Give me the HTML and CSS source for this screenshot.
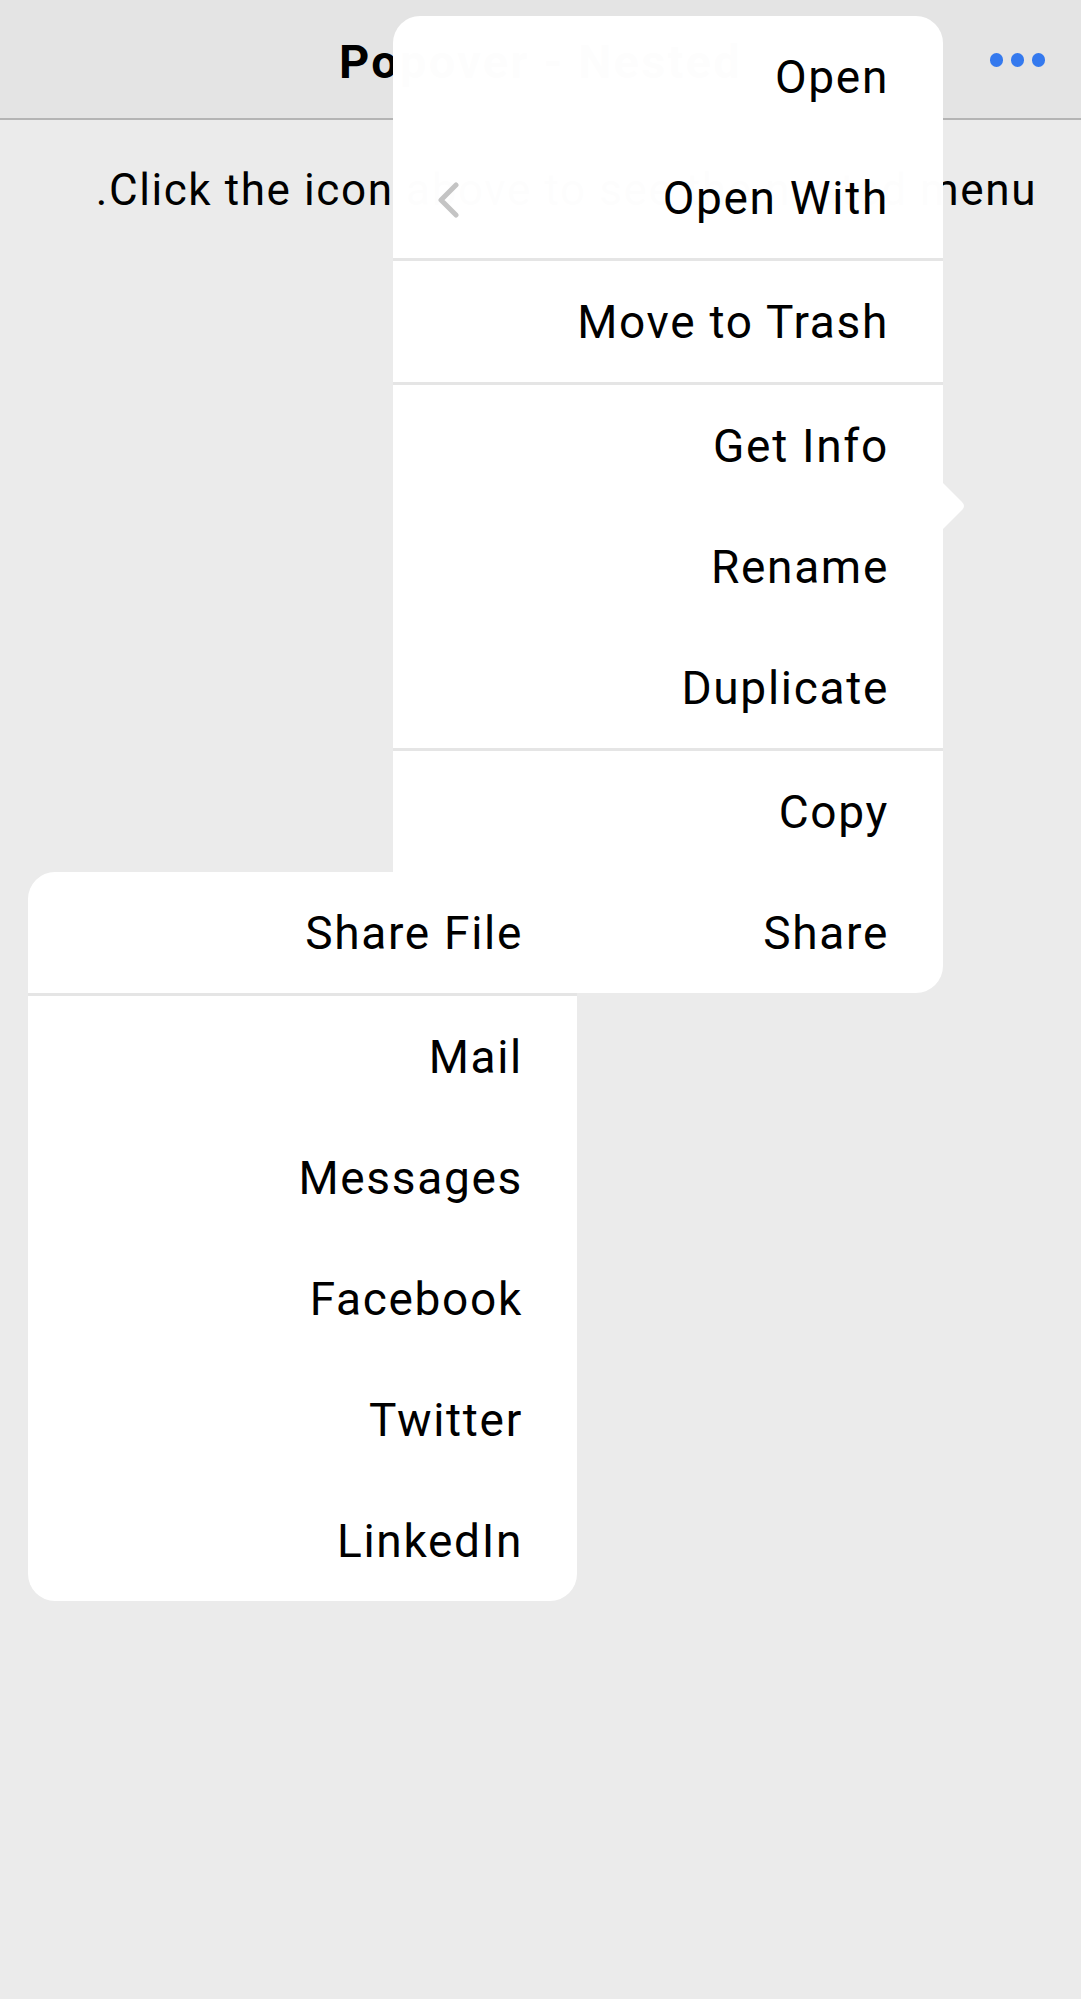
FILE: index.html
```html
<!DOCTYPE html>
<html lang="en">
<head>
<meta charset="utf-8">
<title>Popover - Nested</title>
<link rel="stylesheet" href="styles.css">
</head>
<body>
<div class="app">
  <header class="toolbar">
    <div class="title">Popover - Nested</div>
    <button class="more" aria-label="More">
      <span class="dot"></span><span class="dot"></span><span class="dot"></span>
    </button>
  </header>
  <main class="content" dir="rtl">
    <p class="hint">Click the icon above to see the nested menu.</p>
  </main>
</div>

<div class="popover main-menu" dir="rtl">
  <div class="item">Open</div>
  <div class="item has-detail">Open With
    <svg class="detail" viewBox="0 0 22 36" width="22" height="36"><polyline points="19,3 4,18 19,33" fill="none" stroke="#c4c4c4" stroke-width="5" stroke-linecap="round" stroke-linejoin="round"/></svg>
  </div>
  <div class="sep"></div>
  <div class="item">Move to Trash</div>
  <div class="sep"></div>
  <div class="item">Get Info</div>
  <div class="item">Rename</div>
  <div class="item">Duplicate</div>
  <div class="sep"></div>
  <div class="item">Copy</div>
  <div class="item">Share</div>
  <svg class="arrow" viewBox="0 0 26 48" width="26" height="48"><path d="M0 0 L20 20 Q24 24 20 28 L0 48 Z" fill="#fff"/></svg>
</div>

<div class="popover sub-menu" dir="rtl">
  <div class="item">Share File</div>
  <div class="sep"></div>
  <div class="item">Mail</div>
  <div class="item">Messages</div>
  <div class="item">Facebook</div>
  <div class="item">Twitter</div>
  <div class="item">LinkedIn</div>
</div>
</body>
</html>
```

FILE: styles.css
```css
html, body {
  margin: 0;
  padding: 0;
}
body {
  width: 1081px;
  height: 1999px;
  background: #ebebeb;
  font-family: Roboto, "Noto Sans", sans-serif;
  color: #000;
  position: relative;
  overflow: hidden;
}
.app {
  display: flex;
  flex-direction: column;
}
.toolbar {
  height: 118px;
  background: #e4e4e4;
  border-bottom: 2px solid #b4b4b4;
  display: flex;
  align-items: center;
  justify-content: center;
  position: relative;
}
.title {
  font-weight: 700;
  font-size: 47px;
  letter-spacing: 2.2px;
  margin-top: 4px;
}
.more {
  position: absolute;
  right: 36px;
  top: 53px;
  display: flex;
  gap: 7.5px;
  padding: 0;
  border: 0;
  background: none;
}
.dot {
  width: 13.5px;
  height: 13.5px;
  border-radius: 50%;
  background: #3479ee;
}
.content {
  padding: 0 44px;
}
.hint {
  margin: 44px 0 0;
  font-size: 44px;
  line-height: 53px;
  letter-spacing: 1.6px;
}
.popover {
  position: absolute;
  width: 550px;
  background: rgba(255, 255, 255, 0.993);
  border-radius: 27px;
  display: flex;
  flex-direction: column;
}
.main-menu {
  left: 393px;
  top: 16px;
}
.sub-menu {
  left: 28px;
  top: 872px;
  width: 549px;
  background: #fff;
}
.item {
  height: 121px;
  display: flex;
  align-items: center;
  padding-right: 54px;
  font-size: 46px;
  letter-spacing: 1.7px;
  position: relative;
}
.sep {
  height: 3px;
  background: #e5e5e5;
}
.detail {
  position: absolute;
  left: 44px;
  top: 45px;
}
.arrow {
  position: absolute;
  left: 549px;
  top: 466px;
}
```
